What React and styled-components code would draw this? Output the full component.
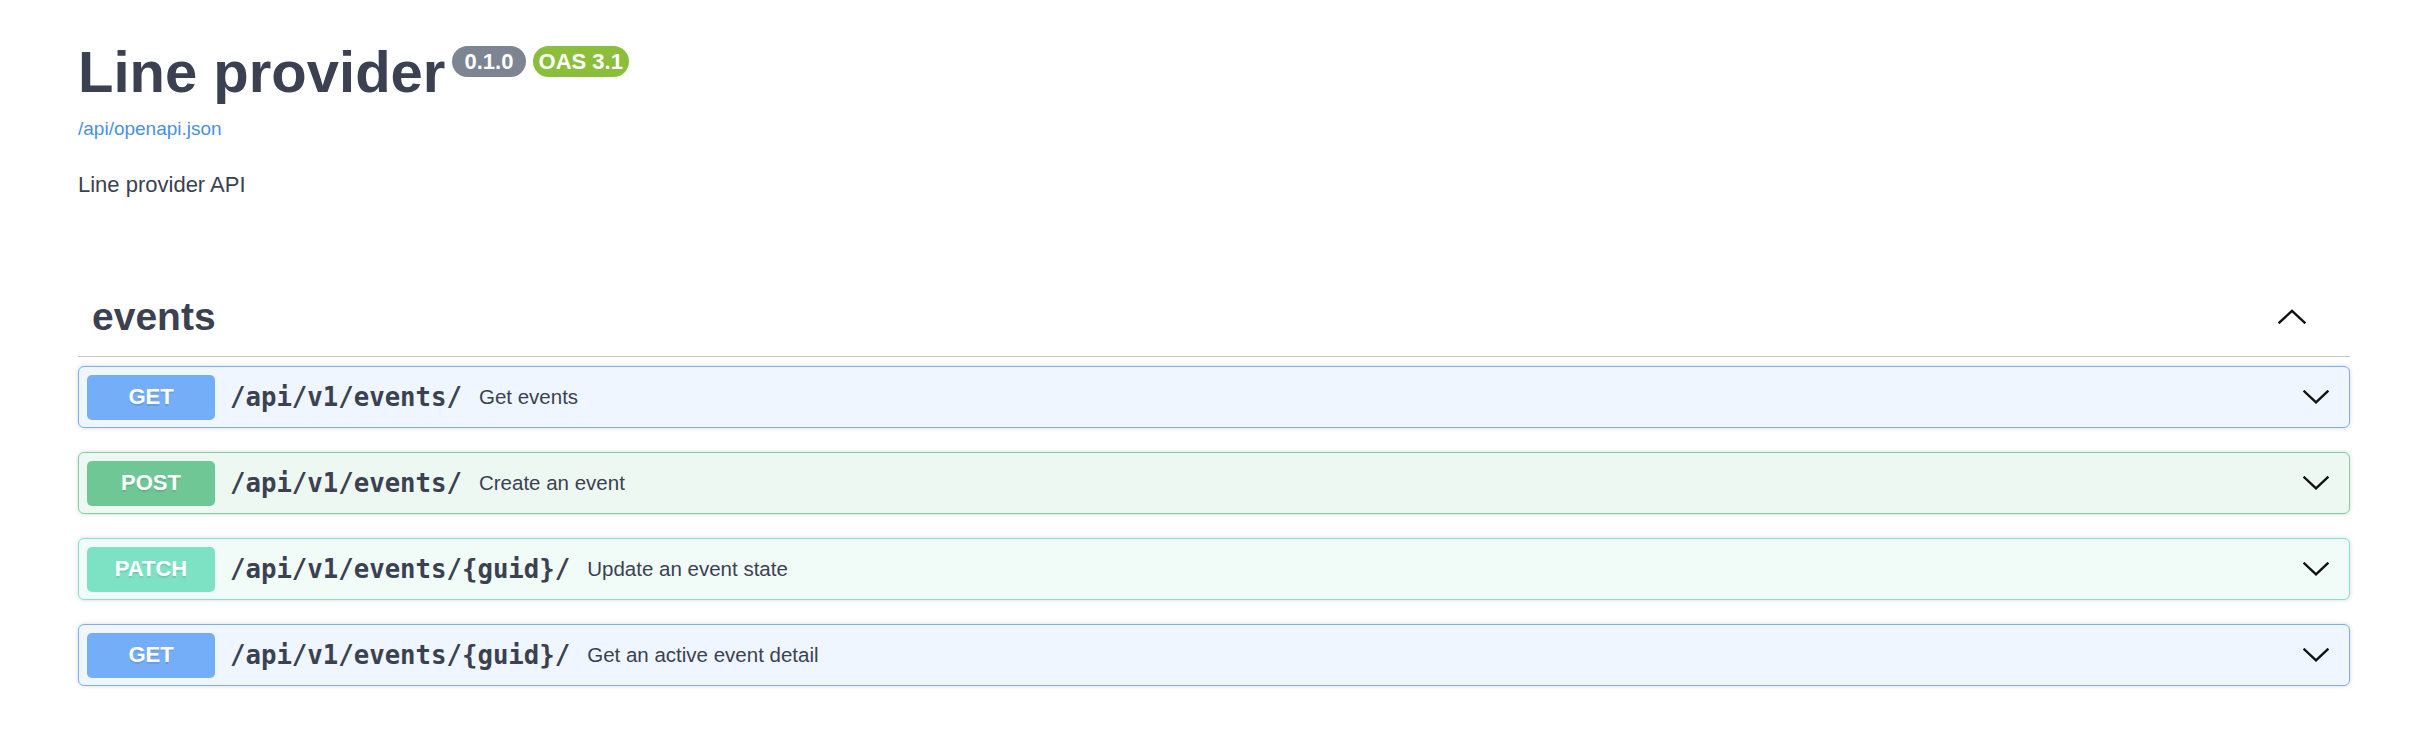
import React from "react";
import styled, { createGlobalStyle } from "styled-components";

const GlobalStyle = createGlobalStyle`
  html, body {
    margin: 0;
    padding: 0;
    background: #ffffff;
  }
  body {
    font-family: "Liberation Sans", Arial, sans-serif;
    color: #3b4151;
  }
`;

const methodColors = {
  get: { badge: "#74aef8", bg: "#eff6ff", border: "#7cadf5" },
  post: { badge: "#6fc796", bg: "#eef8f3", border: "#80cfa2" },
  patch: { badge: "#7de2c4", bg: "#f1fbf8", border: "#86e3c9" },
};

const operations = [
  { method: "get", path: "/api/v1/events/", summary: "Get events" },
  { method: "post", path: "/api/v1/events/", summary: "Create an event" },
  { method: "patch", path: "/api/v1/events/{guid}/", summary: "Update an event state" },
  { method: "get", path: "/api/v1/events/{guid}/", summary: "Get an active event detail" },
];

const Chevron = ({ up }) => (
  <svg width={up ? 28 : 26} height={up ? 15 : 14} viewBox={up ? "0 0 28 15" : "0 0 26 14"} fill="none">
    {up ? (
      <polyline points="1.5,13.5 14,1.8 26.5,13.5" stroke="#111" strokeWidth="2.4" strokeLinecap="square" />
    ) : (
      <polyline points="1.5,1.5 13,12.3 24.5,1.5" stroke="#111" strokeWidth="2.4" strokeLinecap="square" />
    )}
  </svg>
);

const App = () => {
  return (
    <>
      <GlobalStyle />
      <Page>
        <Info>
          <TitleRow>
            <Title>Line provider</Title>
            <Badge>{" 0.1.0 "}</Badge>
            <Badge tone="green">OAS 3.1</Badge>
          </TitleRow>
          <SpecLink href="#">/api/openapi.json</SpecLink>
          <Description>Line provider API</Description>
        </Info>

        <TagSection>
          <TagHeader>
            <TagName>events</TagName>
            <TagToggle>
              <Chevron up />
            </TagToggle>
          </TagHeader>

          <OpList>
            {operations.map((op, i) => (
              <OpBlock key={i} method={op.method}>
                <Method method={op.method}>{op.method.toUpperCase()}</Method>
                <OpPath>{op.path}</OpPath>
                <OpSummary>{op.summary}</OpSummary>
                <OpArrow>
                  <Chevron />
                </OpArrow>
              </OpBlock>
            ))}
          </OpList>
        </TagSection>
      </Page>
    </>
  );
};

const Page = styled.div`
  padding: 0 78px 40px;
`;

const Info = styled.div`
  padding-top: 39px;
  margin-bottom: 77px;
`;

const TitleRow = styled.div`
  display: flex;
  align-items: flex-start;
`;

const Title = styled.h2`
  margin: 0;
  font-size: 58px;
  line-height: 66px;
  font-weight: 700;
  color: #3b4151;
`;

const Badge = styled.span`
  margin: 7px 0 0 7px;
  height: 31px;
  line-height: 31px;
  padding: 0 6px;
  border-radius: 16px;
  background: ${(p) => (p.tone === "green" ? "#8bbe3a" : "#7d8492")};
  color: #ffffff;
  font-size: 22px;
  font-weight: 700;
  white-space: pre;
`;

const SpecLink = styled.a`
  display: block;
  margin-top: 13px;
  font-size: 19px;
  line-height: 22px;
  color: #4a90e2;
  text-decoration: none;
`;

const Description = styled.p`
  margin: 32px 0 0;
  font-size: 22px;
  line-height: 26px;
  color: #3b4151;
`;

const TagSection = styled.div``;

const TagHeader = styled.div`
  display: flex;
  align-items: center;
  justify-content: space-between;
  height: 82px;
  padding: 2px 44px 0 14px;
  box-sizing: border-box;
  border-bottom: 1px solid #c5c7cc;
`;

const TagName = styled.h3`
  margin: 0;
  font-size: 39px;
  line-height: 44px;
  font-weight: 700;
  color: #3b4151;
`;

const TagToggle = styled.div`
  display: flex;
  align-items: center;
`;

const OpList = styled.div`
  display: flex;
  flex-direction: column;
  gap: 24px;
  padding-top: 9px;
`;

const OpBlock = styled.div`
  box-sizing: border-box;
  height: 62px;
  display: flex;
  align-items: center;
  padding: 0 20px 0 8px;
  border: 1.5px solid ${(p) => methodColors[p.method].border};
  border-radius: 6px;
  background: ${(p) => methodColors[p.method].bg};
  box-shadow: 0 0 4px rgba(0, 0, 0, 0.16);
`;

const Method = styled.div`
  width: 128px;
  height: 45px;
  display: flex;
  align-items: center;
  justify-content: center;
  border-radius: 5px;
  background: ${(p) => methodColors[p.method].badge};
  color: #ffffff;
  font-size: 22px;
  font-weight: 700;
  text-shadow: 0 1.5px 0 rgba(0, 0, 0, 0.1);
`;

const OpPath = styled.span`
  padding: 0 17px 0 15px;
  font-family: "DejaVu Sans Mono", "Liberation Mono", monospace;
  font-size: 25.7px;
  font-weight: 700;
  color: #3b4151;
`;

const OpSummary = styled.span`
  flex: 1;
  font-size: 20.5px;
  color: #3b4151;
`;

const OpArrow = styled.div`
  display: flex;
  align-items: center;
`;

export default App;
